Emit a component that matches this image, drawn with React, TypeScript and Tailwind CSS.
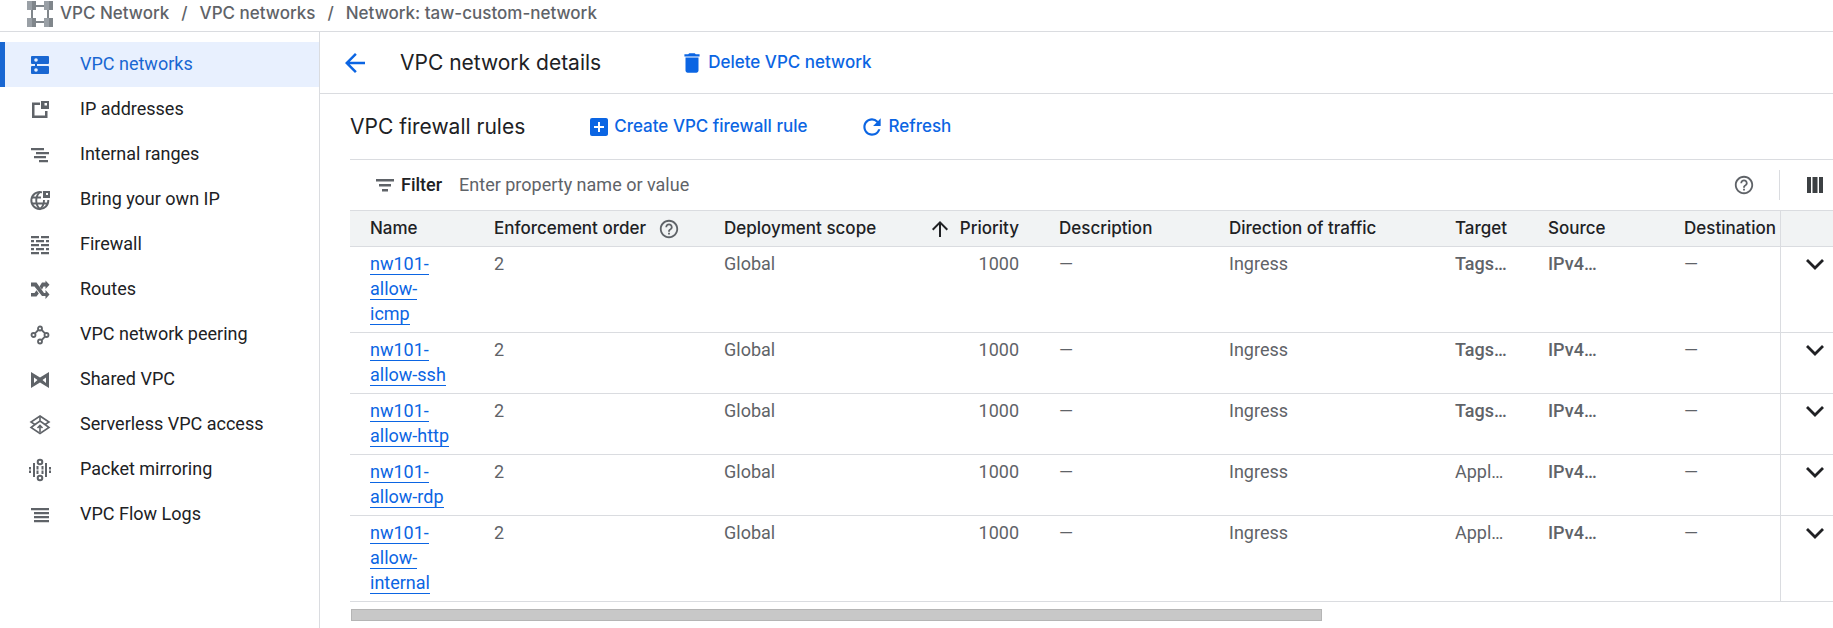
import type { ReactNode } from 'react';
import { MdAddBox, MdArrowBack, MdArrowUpward, MdDelete, MdHelpOutline, MdRefresh } from 'react-icons/md';

type NavItem = { label: string; icon: ReactNode; active?: boolean };

function NavIcon({ children }: { children: ReactNode }) {
  return (
    <svg viewBox="0 0 24 24" className="size-6 shrink-0" fill="currentColor" aria-hidden="true">
      {children}
    </svg>
  );
}

const navItems: NavItem[] = [
  {
    label: 'VPC networks',
    active: true,
    icon: (
      <NavIcon>
        <path
          fillRule="evenodd"
          d="M4 3h16a1 1 0 0 1 1 1v6a1 1 0 0 1-1 1H9v2h11a1 1 0 0 1 1 1v6a1 1 0 0 1-1 1H4a1 1 0 0 1-1-1v-6a1 1 0 0 1 1-1h3v-2H4a1 1 0 0 1-1-1V4a1 1 0 0 1 1-1zm4 2.200a1.800 1.800 0 1 0 0 3.600 1.800 1.800 0 0 0 0-3.600zm0 10a1.800 1.800 0 1 0 0 3.600 1.800 1.800 0 0 0 0-3.600z"
        />
      </NavIcon>
    ),
  },
  {
    label: 'IP addresses',
    icon: (
      <NavIcon>
        <path d="M4 4.500h8v2.500H6.500v10.500h10.500V13H19.500v7H4z" />
        <path fillRule="evenodd" d="M13 3h8v8h-8zm3.500 2v2.500H19V5z" />
      </NavIcon>
    ),
  },
  {
    label: 'Internal ranges',
    icon: (
      <NavIcon>
        <path d="M3 5h13v2.300H3zM8 9h13v2.300H8zM6 13h12v2.300H6zM11 17h9v2.300h-9z" />
      </NavIcon>
    ),
  },
  {
    label: 'Bring your own IP',
    icon: (
      <NavIcon>
        <g fill="none" stroke="currentColor" strokeWidth="1.900">
          <path d="M14 4.300A8.500 8.500 0 1 0 20.300 12" />
          <path d="M12 4c-5 4-5 13 0 17 3-2.400 4-5.500 4-9M4 9.500h9M4 15.500h16" />
        </g>
        <path fillRule="evenodd" d="M15 3h7v7h-7zm3 2v2h2V5z" />
      </NavIcon>
    ),
  },
  {
    label: 'Firewall',
    icon: (
      <NavIcon>
        <path d="M3 3h8v2.300H3zM13 3h8v2.300h-8zM3 7h3v2.300H3zM8 7h8v2.300H8zM18 7h3v2.300h-3zM3 11h8v2.300H3zM13 11h8v2.300h-8zM3 15h3v2.300H3zM8 15h8v2.300H8zM18 15h3v2.300h-3zM3 19h8v2.300H3zM13 19h8v2.300h-8z" />
      </NavIcon>
    ),
  },
  {
    label: 'Routes',
    icon: (
      <NavIcon>
        <path d="M3 4.500h5.500L16 15h1.500v-3l4 4.500-4 4.500v-3H14L6.500 8.500H3z" />
        <path d="M3 18.500h5.500l2.300-3-2.300-3.300L6.500 15H3zM11.500 8.500l2.500-4h3.500V2.500l4 4.200-4 4.300V8.500h-2L14 11.500z" />
      </NavIcon>
    ),
  },
  {
    label: 'VPC network peering',
    icon: (
      <NavIcon>
        <g fill="none" stroke="currentColor" strokeWidth="1.800">
          <circle cx="12" cy="5.500" r="2" />
          <circle cx="5.500" cy="12" r="2" />
          <circle cx="18.500" cy="12" r="2" />
          <circle cx="12" cy="18.500" r="2" />
          <path d="M10.300 7 7 10.300M13.700 7l3.300 3.300M17 13.700l-3.300 3.300" />
        </g>
      </NavIcon>
    ),
  },
  {
    label: 'Shared VPC',
    icon: (
      <NavIcon>
        <path fillRule="evenodd" d="M3 4l9 5.500L21 4v16l-9-5.500L3 20zm3 5.500v5.500l3.500-3zm12 0L14.500 12l3.500 3z" />
      </NavIcon>
    ),
  },
  {
    label: 'Serverless VPC access',
    icon: (
      <NavIcon>
        <g fill="none" stroke="currentColor" strokeWidth="1.600">
          <path d="M12 3l9 6-4 2.500 4 3-9 6-9-6 4-3L3 9z" />
          <path d="M7 11.500l5-3.500 5 3.500M12 3v5M12 19v-6M9.500 15l2.500-2.500 2.500 2.500" />
        </g>
      </NavIcon>
    ),
  },
  {
    label: 'Packet mirroring',
    icon: (
      <NavIcon>
        <path d="M1 9h2v2.500H1zM1 12.500h2V15H1zM5 5h2v14H5zM8.500 8h2v3.500h-2zM8.500 12.500h2V16h-2zM13.500 8h2v3.500h-2zM13.500 12.500h2V16h-2zM17 5h2v14h-2zM21 9h2v2.500h-2zM21 12.500h2V15h-2z" />
        <g fill="none" stroke="currentColor" strokeWidth="2">
          <circle cx="12" cy="4" r="2.300" />
          <circle cx="12" cy="20" r="2.300" />
        </g>
      </NavIcon>
    ),
  },
  {
    label: 'VPC Flow Logs',
    icon: (
      <NavIcon>
        <path d="M3 5h18v2.300H3zM6 9h15v2.300H6zM6 13h15v2.300H6zM6 17h15v2.300H6z" />
      </NavIcon>
    ),
  },
];

const rules = [
  { name: 'nw101-allow-icmp', target: 'Tags…', tagged: true },
  { name: 'nw101-allow-ssh', target: 'Tags…', tagged: true },
  { name: 'nw101-allow-http', target: 'Tags…', tagged: true },
  { name: 'nw101-allow-rdp', target: 'Appl…', tagged: false },
  { name: 'nw101-allow-internal', target: 'Appl…', tagged: false },
];

function ProductLogo() {
  return (
    <svg viewBox="0 0 26 26" className="size-[26px]" aria-hidden="true">
      <path d="M5 5h16v16H5z" fill="none" stroke="#80868b" strokeWidth="2" />
      <path d="M0 0h9v9H0zM17 0h9v9h-9zM0 17h9v9H0zM17 17h9v9h-9z" fill="#9aa0a6" />
      <path d="M5 0h4v9H5zM22 0h4v9h-4zM5 17h4v9H5zM22 17h4v9h-4z" fill="#80868b" />
    </svg>
  );
}

function Breadcrumbs() {
  return (
    <header className="flex h-8 items-center border-b border-[#dadce0] pb-[3px] pl-[27px] font-[Inter,sans-serif] text-[17px] font-medium text-[#5f6368]">
      <ProductLogo />
      <nav aria-label="Breadcrumb" className="flex gap-3 pl-[7px] whitespace-nowrap">
        <a href="#vpc">VPC Network</a>
        <span>/</span>
        <a href="#networks">VPC networks</a>
        <span>/</span>
        <a href="#network">Network: taw-custom-network</a>
      </nav>
    </header>
  );
}

function Sidebar() {
  return (
    <nav className="w-80 shrink-0 border-r border-[#dadce0] pt-[10px]">
      {navItems.map((item) => (
        <a
          key={item.label}
          href="#nav"
          className={
            item.active
              ? 'flex h-[45px] items-center gap-7 border-l-5 border-[#1967d2] bg-[#e8f0fe] pt-px pl-[23px] text-lg text-[#1967d2]'
              : 'flex h-[45px] items-center gap-7 border-l-5 border-transparent pt-px pl-[23px] text-lg text-[#202124]'
          }
        >
          <span className={item.active ? '' : 'text-[#5f6368]'}>{item.icon}</span>
          <span className="pb-0.5">{item.label}</span>
        </a>
      ))}
    </nav>
  );
}

function Toolbar() {
  return (
    <div className="flex h-[62px] items-center border-b border-[#dadce0] pl-5 font-[Inter,sans-serif]">
      <button aria-label="Back" className="text-[#0b65e3]">
        <MdArrowBack className="size-[30px]" />
      </button>
      <h1 className="pl-[30px] text-[21px] text-[#202124]">VPC network details</h1>
      <button className="ml-[78px] flex items-center gap-[3px] text-[17px] font-medium text-[#0b65e3]">
        <MdDelete className="size-[26px]" />
        Delete VPC network
      </button>
    </div>
  );
}

function FilterBar() {
  return (
    <div className="flex h-[51px] items-center border-t border-[#dadce0] pl-6">
      <svg viewBox="0 0 24 24" className="size-6 text-[#5f6368]" fill="currentColor" aria-hidden="true">
        <path d="M2 6h18v2.500H2zM5 11h12v2.500H5zM8 16h6v2.500H8z" />
      </svg>
      <label htmlFor="filter" className="pl-[3px] text-lg font-medium text-[#202124]">
        Filter
      </label>
      <input
        id="filter"
        placeholder="Enter property name or value"
        className="ml-[17px] min-w-0 flex-1 text-lg outline-none placeholder:text-[#5f6368]"
      />
      <button aria-label="Help" className="text-[#5f6368]">
        <MdHelpOutline className="size-[22px]" />
      </button>
      <div className="ml-6 h-[30px] w-px bg-[#dadce0]" />
      <button aria-label="Column display options" className="mr-[10px] ml-[27px] text-[#3c4043]">
        <svg viewBox="0 0 16 16" className="size-4" fill="currentColor" aria-hidden="true">
          <path d="M0 0h4v16H0zM5.500 0h5v16h-5zM12 0h4v16h-4z" />
        </svg>
      </button>
    </div>
  );
}

function RulesTable() {
  return (
    <table className="w-full table-fixed border-collapse text-lg leading-[25px] text-[#5f6368]">
      <colgroup>
        <col className="w-[124px]" />
        <col className="w-[230px]" />
        <col />
        <col className="w-[139px]" />
        <col className="w-[170px]" />
        <col className="w-[226px]" />
        <col className="w-[93px]" />
        <col className="w-[136px]" />
        <col className="w-[116px]" />
        <col className="w-[53px]" />
      </colgroup>
      <thead className="border-y border-[#dadce0] bg-[#f1f3f4] text-left font-[Inter,sans-serif] text-[17px] whitespace-nowrap text-[#202124]">
        <tr className="h-9 [&>th]:pl-5 [&>th]:font-medium">
          <th>Name</th>
          <th>
            <span className="flex items-center gap-3">
              Enforcement order
              <MdHelpOutline className="size-[22px] text-[#5f6368]" />
            </span>
          </th>
          <th>Deployment scope</th>
          <th className="pr-5">
            <button className="ml-auto flex items-center gap-2">
              <MdArrowUpward className="size-6" />
              Priority
            </button>
          </th>
          <th>Description</th>
          <th>Direction of traffic</th>
          <th>Target</th>
          <th>Source</th>
          <th>Destination</th>
          <th className="border-l border-[#dadce0]" aria-label="Expand" />
        </tr>
      </thead>
      <tbody>
        {rules.map((rule) => (
          <tr key={rule.name} className="border-b border-[#dadce0] align-top [&>td]:pt-1 [&>td]:pb-[6px] [&>td]:pl-5">
            <td className="pr-6">
              <a href="#rule" className="border-b border-[#0b65e3] text-[#0b65e3]">
                {rule.name}
              </a>
            </td>
            <td>2</td>
            <td>Global</td>
            <td className="pr-5 text-right">1000</td>
            <td>—</td>
            <td>Ingress</td>
            <td className={rule.tagged ? 'font-medium' : ''}>{rule.target}</td>
            <td className="font-medium">IPv4…</td>
            <td>—</td>
            <td className="border-l border-[#dadce0]">
              <button aria-label="Expand row" className="block text-[#202124]">
                <svg viewBox="0 0 30 26" className="h-[26px] w-[30px]" fill="none" aria-hidden="true">
                  <path d="M6 9l8 8 8-8" stroke="currentColor" strokeWidth="2.800" />
                </svg>
              </button>
            </td>
          </tr>
        ))}
      </tbody>
    </table>
  );
}

export default function App() {
  return (
    <div className="flex min-h-screen flex-col overflow-hidden bg-white font-[Roboto,sans-serif]">
      <Breadcrumbs />
      <div className="flex flex-1">
        <Sidebar />
        <main className="min-w-0 flex-1">
          <Toolbar />
          <section className="pl-[30px]">
            <div className="flex h-[65px] items-center font-[Inter,sans-serif] text-[17px] font-medium text-[#0b65e3]">
              <h2 className="text-[21px] font-normal text-[#202124]">VPC firewall rules</h2>
              <button className="ml-[62px] flex items-center gap-[3px]">
                <MdAddBox className="size-6" />
                Create VPC firewall rule
              </button>
              <button className="ml-[52px] flex items-center gap-[3px]">
                <MdRefresh className="size-[26px]" />
                Refresh
              </button>
            </div>
            <FilterBar />
            <RulesTable />
            <div className="pt-[7px] pl-px">
              <div className="h-3 w-[65.5%] border border-[#b5b5b5] bg-[#c8c8c8]" />
            </div>
          </section>
        </main>
      </div>
    </div>
  );
}
